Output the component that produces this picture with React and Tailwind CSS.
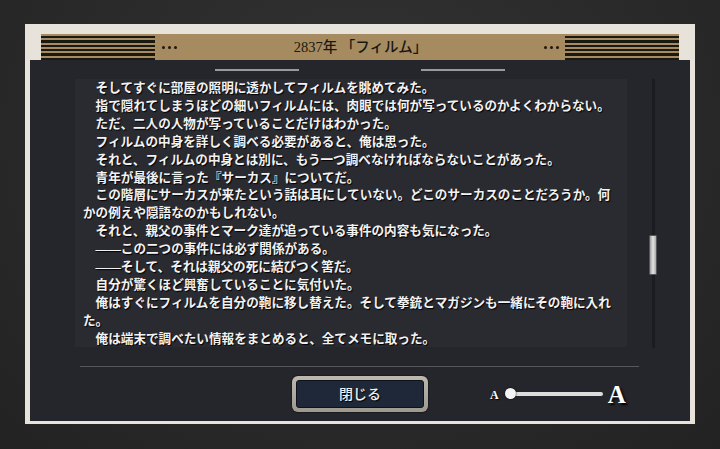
import React from "react";

const lines = [
  "　そしてすぐに部屋の照明に透かしてフィルムを眺めてみた。",
  "　指で隠れてしまうほどの細いフィルムには、肉眼では何が写っているのかよくわからない。",
  "　ただ、二人の人物が写っていることだけはわかった。",
  "　フィルムの中身を詳しく調べる必要があると、俺は思った。",
  "　それと、フィルムの中身とは別に、もう一つ調べなければならないことがあった。",
  "　青年が最後に言った『サーカス』についてだ。",
  "　この階層にサーカスが来たという話は耳にしていない。どこのサーカスのことだろうか。何",
  "かの例えや隠語なのかもしれない。",
  "　それと、親父の事件とマーク達が追っている事件の内容も気になった。",
  "　――この二つの事件には必ず関係がある。",
  "　――そして、それは親父の死に結びつく筈だ。",
  "　自分が驚くほど興奮していることに気付いた。",
  "　俺はすぐにフィルムを自分の鞄に移し替えた。そして拳銃とマガジンも一緒にその鞄に入れ",
  "た。",
  "　俺は端末で調べたい情報をまとめると、全てメモに取った。",
];

const Stripes = () => (
  <div className="w-[114px] h-full bg-[repeating-linear-gradient(to_bottom,#a68b60_0px,#a68b60_2px,#1b1711_2px,#1b1711_4.3px)]" />
);

const Dots = () => (
  <div className="flex gap-[3px]">
    <span className="w-[3px] h-[3px] rounded-full bg-[#1b1711]" />
    <span className="w-[3px] h-[3px] rounded-full bg-[#1b1711]" />
    <span className="w-[3px] h-[3px] rounded-full bg-[#1b1711]" />
  </div>
);

export default function App() {
  return (
    <div className="w-[720px] h-[449px] overflow-hidden bg-[radial-gradient(ellipse_at_50%_30%,#333333_0%,#2a2a2a_55%,#222222_100%)] pt-[24px] pl-[25px] font-['Liberation_Serif','Noto_Sans_CJK_JP',serif]">
      <div className="w-[670px] h-[400px] bg-[#e7e3db] pt-[10px] px-[5px] pb-[3px] flex flex-col">
        {/* header bar */}
        <div className="mx-[11px] h-[26px] bg-[#a68b60] flex items-center">
          <Stripes />
          <div className="ml-[7px]">
            <Dots />
          </div>
          <div className="flex-1 text-center text-[14.5px] text-[#1b1711] font-medium leading-none">
            2837年 「フィルム」
          </div>
          <div className="mr-[6px]">
            <Dots />
          </div>
          <Stripes />
        </div>

        {/* dark panel */}
        <div className="flex-1 bg-[#25262c] flex flex-col">
          <div className="mt-[9px] flex justify-center gap-[122px] pr-[1px]">
            <div className="w-[84px] h-[2px] bg-[#9a9a9c]" />
            <div className="w-[84px] h-[2px] bg-[#9a9a9c]" />
          </div>

          <div className="mt-[8px] flex">
            <div className="ml-[45px] w-[552px] h-[268px] bg-[#2a2b31] pl-[8px] pt-[1px] overflow-hidden">
              {lines.map((line, i) => (
                <div
                  key={i}
                  className="whitespace-nowrap text-[12.6px] leading-[17.9px] font-bold text-[#f2f2f2] [text-shadow:1px_1px_1px_#000]"
                >
                  {line}
                </div>
              ))}
            </div>
            <div className="ml-[22px] w-[8px] h-[269px] flex justify-center relative">
              <div className="w-[3px] h-full bg-[#1b1c21]" />
              <div className="absolute left-0 top-[156px] w-[8px] h-[40px] rounded-[1px] border border-[#55565a] bg-[linear-gradient(to_right,#9d9d9d,#e4e4e4_50%,#a9a9a9)]" />
            </div>
          </div>

          <div className="mt-[18px] ml-[50px] w-[559px] h-[1px] bg-[#56575d]" />

          <div className="mt-[9px] grid grid-cols-[1fr_auto_1fr] items-center">
            <div />
            <div className="w-[136px] h-[36px] rounded-[6px] p-[4px] bg-[linear-gradient(to_bottom,#bdb8ad,#9e998e)] shadow-[0_0_2px_#000]">
              <div className="w-full h-full rounded-[3px] bg-[#1f2838] border border-[#0d1119] flex items-center justify-center text-[14px] text-[#f0f0f0] font-medium [text-shadow:1px_1px_1px_#000]">
                閉じる
              </div>
            </div>
            <div className="flex items-center pl-[62px]">
              <span className="text-[12px] font-bold text-white leading-none [text-shadow:1px_1px_1px_#000] mt-[2px]">
                A
              </span>
              <div className="ml-[6px] w-[98px] h-[12px] flex items-center relative">
                <div className="ml-[5px] w-[93px] h-[4px] rounded-full bg-[#dcdcdc]" />
                <div className="absolute left-0 top-0 w-[11px] h-[11px] rounded-full bg-[#f4f4f4] shadow-[0_0_2px_#000]" />
              </div>
              <span className="ml-[5px] text-[25px] font-bold text-white leading-none [text-shadow:2px_2px_2px_#000]">
                A
              </span>
            </div>
          </div>
        </div>
      </div>
    </div>
  );
}
